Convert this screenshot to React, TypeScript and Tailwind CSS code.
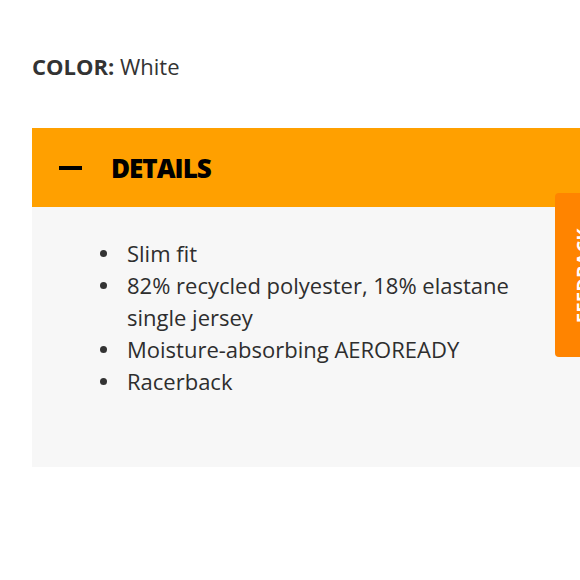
import React from "react";

const items = [
  "Slim fit",
  "82% recycled polyester, 18% elastane single jersey",
  "Moisture-absorbing AEROREADY",
  "Racerback",
];

export default function App() {
  return (
    <div className="relative w-[580px] h-[580px] overflow-hidden bg-white font-['Open_Sans',sans-serif] text-[#333]">
      <div className="pl-8 pt-[51px]">
        <p className="text-[22px] leading-[30px]">
          <span className="font-bold">COLOR:</span> White
        </p>
      </div>

      {/* Accordion */}
      <div className="ml-8 mt-[47px] w-[560px]">
        <div className="h-[79px] bg-[#ffa000] flex items-center pl-[27px]">
          <span className="block w-[23px] h-[4px] bg-black" />
          <span className="ml-[29px] text-[26px] font-extrabold tracking-[-1px] text-black leading-none">
            DETAILS
          </span>
        </div>
        <div className="h-[260px] bg-[#f7f7f7] pt-[30px]">
          <ul className="pl-[95px] pr-[40px] text-[22px] leading-[32px] text-[#2e2e2e]">
            {items.map((t) => (
              <li key={t} className="relative">
                <span className="absolute -left-[27px] top-[13px] w-[7px] h-[7px] rounded-full bg-[#333]" />
                {t}
              </li>
            ))}
          </ul>
        </div>
      </div>

      {/* side tab */}
      <div className="absolute left-[555px] top-[193px] w-[40px] h-[164px] rounded-l-[4px] bg-[#ff8400] flex items-center justify-start pl-[15px]">
        <span className="block [writing-mode:vertical-rl] rotate-180 text-white text-[18px] font-bold tracking-wide">
          FEEDBACK
        </span>
      </div>
    </div>
  );
}
